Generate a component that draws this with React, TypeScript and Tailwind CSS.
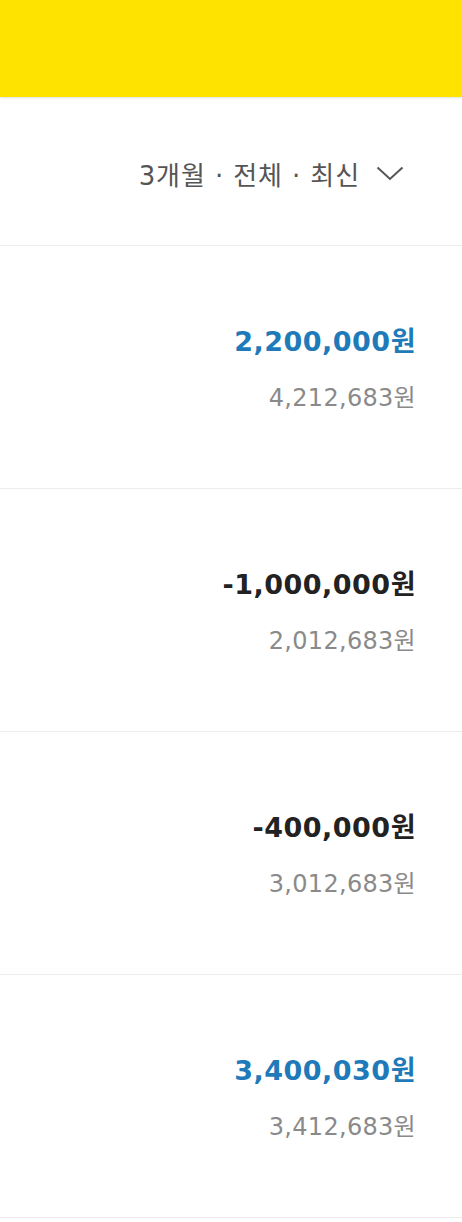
import React from "react";

const items = [
  { amount: "2,200,000원", balance: "4,212,683원", positive: true },
  { amount: "-1,000,000원", balance: "2,012,683원", positive: false },
  { amount: "-400,000원", balance: "3,012,683원", positive: false },
  { amount: "3,400,030원", balance: "3,412,683원", positive: true },
];

export default function App() {
  return (
    <div
      className="w-[462px] h-[1222px] bg-white overflow-hidden"
      style={{ fontFamily: '"DejaVu Sans", "Noto Sans CJK KR", sans-serif' }}
    >
      <div className="h-[97px] bg-[#ffe300] shadow-[0_1px_2px_rgba(0,0,0,0.12)] relative z-10" />
      <div className="h-[149px] flex items-center justify-end pr-[58px] pt-[10px] border-b border-[#ececec]">
        <span className="text-[26px] text-[#555555] tracking-[0.9px]">3개월 · 전체 · 최신</span>
        <svg width="28" height="15" viewBox="0 0 28 15" className="ml-[16px] mt-[-6px]">
          <path d="M1.5 1.5 L14 13 L26.5 1.5" fill="none" stroke="#555" strokeWidth="2" />
        </svg>
      </div>
      {items.map((it, i) => (
        <div
          key={i}
          className="h-[243px] border-b border-[#ececec] flex flex-col items-end justify-center pr-[46px] pt-[4px]"
        >
          <div
            className={`text-[27px] font-bold leading-[34px] tracking-[0.5px] ${
              it.positive ? "text-[#1e7ab8]" : "text-[#222222]"
            }`}
          >
            {it.amount}
          </div>
          <div className="text-[24px] leading-[30px] text-[#8a8a8a] mt-[24px] tracking-[0.3px]">{it.balance}</div>
        </div>
      ))}
    </div>
  );
}
